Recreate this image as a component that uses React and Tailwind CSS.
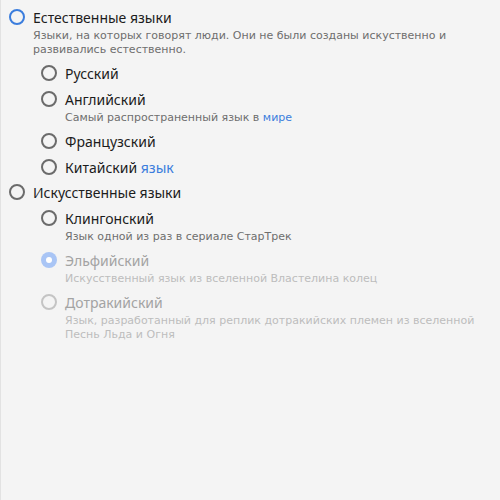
import React from 'react'

const natural = [
  { label: 'Русский' },
  { label: 'Английский', desc: <>Самый распространенный язык в <span className="text-[#3b7ddd]">мире</span></> },
  { label: 'Французский' },
  { label: <>Китайский <span className="text-[#3b7ddd]">язык</span></> },
]

const artificial = [
  { label: 'Клингонский', desc: 'Язык одной из раз в сериале СтарТрек' },
  { label: 'Эльфийский', desc: 'Искусственный язык из вселенной Властелина колец', disabled: true, checked: true },
  {
    label: 'Дотракийский',
    desc: 'Язык, разработанный для реплик дотракийских племен из вселенной Песнь Льда и Огня',
    disabled: true,
  },
]

function Radio({ checked, disabled, focused }) {
  if (checked) {
    return (
      <span className="flex h-4 w-4 shrink-0 items-center justify-center rounded-full bg-[#a9c5f5]">
        <span className="h-1.5 w-1.5 rounded-full bg-white" />
      </span>
    )
  }
  let border = 'border-[#6b6b6b]'
  if (focused) border = 'border-[#3b7ddd]'
  if (disabled) border = 'border-[#c4c4c4]'
  return <span className={`h-4 w-4 shrink-0 rounded-full border-2 ${border}`} />
}

function Option({ label, desc, checked, disabled, focused }) {
  return (
    <div>
      <div className="flex h-5 items-center gap-2">
        <Radio checked={checked} disabled={disabled} focused={focused} />
        <span
          className={`text-[14px] ${disabled ? 'text-[#a3a3a3]' : 'text-[#1c1c1c]'}`}
          style={{ fontFamily: '"Noto Sans", sans-serif' }}
        >
          {label}
        </span>
      </div>
      {desc && (
        <p className={`mt-[2px] pl-6 text-[11px] leading-[14px] ${disabled ? 'text-[#bdbdbd]' : 'text-[#6e6e6e]'}`}>
          {desc}
        </p>
      )}
    </div>
  )
}

export default function App() {
  return (
    <div
      className="min-h-[500px] w-[500px] border-l border-[#e2e2e2] bg-[#f4f4f4] pl-2 pr-4 pt-[7px]"
      style={{ fontFamily: '"DejaVu Sans", sans-serif' }}
    >
      <Option
        focused
        label="Естественные языки"
        desc="Языки, на которых говорят люди. Они не были созданы искуственно и развивались естественно."
      />
      <div className="mt-[6px] flex flex-col gap-[6px] pl-8">
        {natural.map((o, i) => (
          <Option key={i} {...o} />
        ))}
      </div>
      <div className="mt-[5px]">
        <Option label="Искусственные языки" />
      </div>
      <div className="mt-[6px] flex flex-col gap-[6px] pl-8">
        {artificial.map((o, i) => (
          <Option key={i} {...o} />
        ))}
      </div>
    </div>
  )
}
